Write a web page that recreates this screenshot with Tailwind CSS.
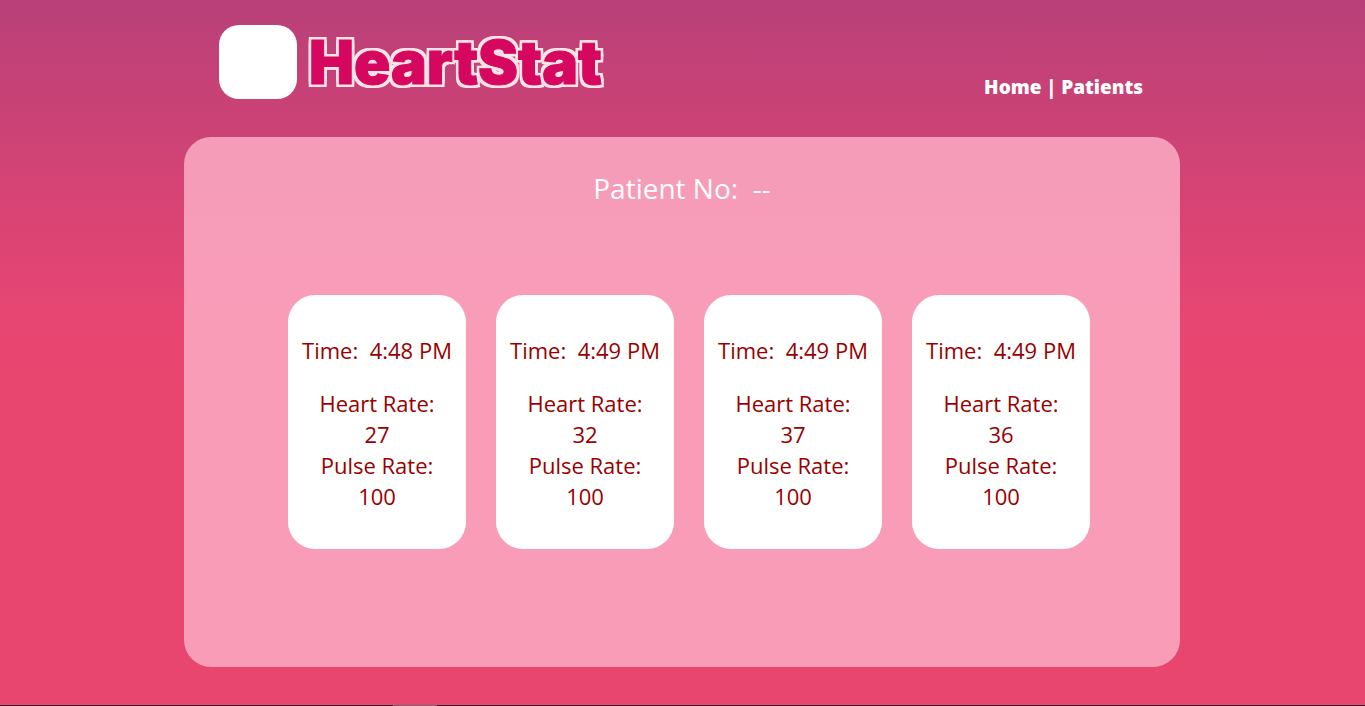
<!DOCTYPE html>
<html lang="en">
<head>
<meta charset="utf-8">
<meta name="viewport" content="width=device-width, initial-scale=1">
<title>HeartStat</title>
<script src="https://cdn.jsdelivr.net/npm/@tailwindcss/browser@4"></script>
</head>
<body class="flex min-h-screen flex-col bg-[#e8466f] bg-[linear-gradient(#b84079_0px,#ca4276_110px,#e84672_325px,#e8466f_380px)] font-['Open_Sans','Noto_Sans',sans-serif] text-white">
  <div class="mx-auto flex w-full max-w-[997px] grow flex-col pr-px pb-[38px]">
    <header class="flex h-[137px] items-start justify-between pt-[25px] pr-[37px] pl-[35px]">
      <a href="#" class="flex items-center gap-[12px]">
        <span class="h-[74px] w-[78px] rounded-[20px] bg-white"></span>
        <span class="font-['Inter',sans-serif] text-[60px] leading-[74px] font-black text-[#d5075f] [-webkit-text-stroke:1px_#d5075f] [text-shadow:3px_0_#fde4e6,-3px_0_#fde4e6,0_3px_#fde4e6,0_-3px_#fde4e6,3px_3px_#fde4e6,-3px_3px_#fde4e6,3px_-3px_#fde4e6,-3px_-3px_#fde4e6,0_0_2px_#fde4e6]">HeartStat</span>
      </a>
      <nav class="mt-[48px] flex gap-[5px] text-[19px] leading-[28px] font-extrabold">
        <a href="#">Home</a><span>|</span><a href="#">Patients</a>
      </nav>
    </header>
    <main class="grow rounded-[27px] bg-[#fdb0c8]/82 pt-[29px]">
      <h1 class="text-center text-[28px] leading-[44px] whitespace-pre">Patient No:  --</h1>
      <div class="mt-[85px] flex flex-wrap justify-center gap-[30px] pl-[14px] text-center text-[22px] leading-[31px] text-[#990000]">
        <section class="h-[254px] w-[178px] rounded-[27px] bg-white pt-[40px]">
          <p class="whitespace-pre">Time:  4:48 PM</p>
          <p class="mt-[22px]">Heart Rate:</p><p>27</p><p>Pulse Rate:</p><p>100</p>
        </section>
        <section class="h-[254px] w-[178px] rounded-[27px] bg-white pt-[40px]">
          <p class="whitespace-pre">Time:  4:49 PM</p>
          <p class="mt-[22px]">Heart Rate:</p><p>32</p><p>Pulse Rate:</p><p>100</p>
        </section>
        <section class="h-[254px] w-[178px] rounded-[27px] bg-white pt-[40px]">
          <p class="whitespace-pre">Time:  4:49 PM</p>
          <p class="mt-[22px]">Heart Rate:</p><p>37</p><p>Pulse Rate:</p><p>100</p>
        </section>
        <section class="h-[254px] w-[178px] rounded-[27px] bg-white pt-[40px]">
          <p class="whitespace-pre">Time:  4:49 PM</p>
          <p class="mt-[22px]">Heart Rate:</p><p>36</p><p>Pulse Rate:</p><p>100</p>
        </section>
      </div>
    </main>
  </div>
  <footer class="flex h-px bg-[#30202b]"><div class="ml-[393px] w-[44px] bg-[#70636a]"></div></footer>
</body>
</html>
